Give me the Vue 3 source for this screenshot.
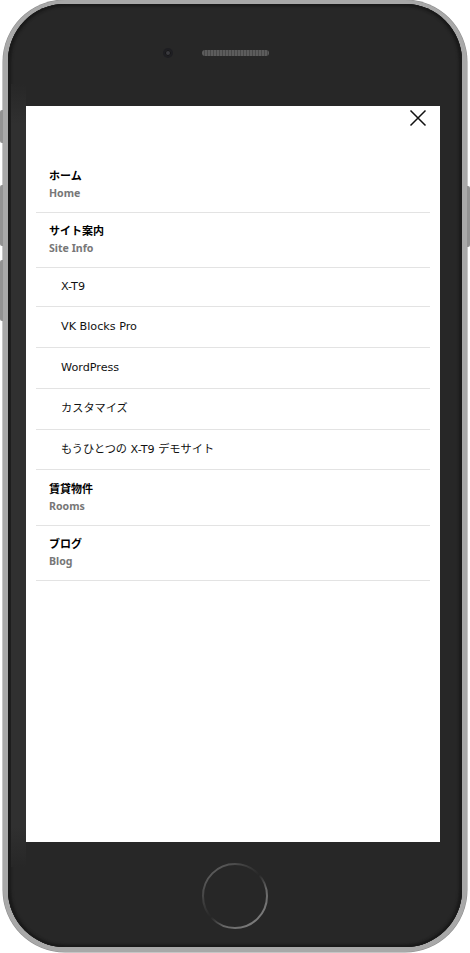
<script setup>
const rows = [
  { ja: 'ホーム', en: 'Home' },
  { ja: 'サイト案内', en: 'Site Info' },
  { sub: 'X-T9' },
  { sub: 'VK Blocks Pro' },
  { sub: 'WordPress' },
  { sub: 'カスタマイズ' },
  { sub: 'もうひとつの X-T9 デモサイト' },
  { ja: '賃貸物件', en: 'Rooms' },
  { ja: 'ブログ', en: 'Blog' },
]
</script>

<template>
  <div class="stage">
    <div class="phone">
      <span class="side left b1"></span>
      <span class="side left b2"></span>
      <span class="side left b3"></span>
      <span class="side right b4"></span>
      <div class="bezel">
        <div class="top">
          <span class="camera"></span>
          <span class="speaker"></span>
        </div>
        <div class="screen">
          <div class="closebar">
            <svg class="close" width="18" height="18" viewBox="0 0 18 18">
              <path d="M1.5 1.5 L16.5 16.5 M16.5 1.5 L1.5 16.5" stroke="#111" stroke-width="1.5" fill="none" />
            </svg>
          </div>
          <ul class="menu">
            <li v-for="r in rows" :key="r.ja || r.sub" :class="r.sub ? 'subrow' : 'mainrow'">
              <template v-if="r.sub">{{ r.sub }}</template>
              <template v-else>
                <strong class="ja">{{ r.ja }}</strong>
                <span class="en">{{ r.en }}</span>
              </template>
            </li>
          </ul>
        </div>
        <div class="bottom">
          <svg class="home" width="70" height="70" viewBox="0 0 70 70">
            <defs>
              <linearGradient id="ring" x1="0.15" y1="0.1" x2="0.85" y2="0.9">
                <stop offset="0" stop-color="#5c5c5c" />
                <stop offset="0.3" stop-color="#3a3a3a" />
                <stop offset="0.5" stop-color="#272727" />
                <stop offset="0.72" stop-color="#666" />
                <stop offset="1" stop-color="#7c7c7c" />
              </linearGradient>
            </defs>
            <circle cx="35" cy="35" r="32" fill="none" stroke="url(#ring)" stroke-width="2" />
          </svg>
        </div>
      </div>
    </div>
  </div>
</template>

<style scoped>
.stage {
  width: 470px;
  height: 953px;
  padding: 0 3px 1px;
  box-sizing: border-box;
  background: #fff;
  overflow: hidden;
}
.phone {
  position: relative;
  height: 952px;
  box-sizing: border-box;
  border: 5px solid #a8a8a8;
  border-top-width: 4px;
  border-radius: 62px;
  box-shadow: 0 0 0 0.5px #8d8d8d;
  background: #262626;
}
.side {
  position: absolute;
  width: 3px;
  background: #929292;
}
.left { left: -8px; border-radius: 2px 0 0 2px; }
.right { right: -8px; border-radius: 0 2px 2px 0; }
.b1 { top: 106px; height: 33px; }
.b2 { top: 181px; height: 61px; }
.b3 { top: 256px; height: 61px; }
.b4 { top: 182px; height: 61px; }
.bezel {
  position: relative;
  height: 100%;
  box-sizing: border-box;
  padding: 0 22px 0 18px;
  display: flex;
  flex-direction: column;
  border-radius: 57px;
  background: #272727;
  box-shadow: inset 0 2px 3px #1a1a1a, inset 3px 0 3px #1b1b1b, inset -3px 0 3px #1b1b1b, inset 0 -2px 3px #1a1a1a;
}
.bezel::before {
  content: "";
  position: absolute;
  left: 3px;
  top: 80px;
  bottom: 80px;
  width: 15px;
  background: linear-gradient(180deg, #272727, #303030 40px, #303030 calc(100% - 40px), #272727);
}
.top {
  height: 102px;
  flex: none;
  position: relative;
}
.camera {
  position: absolute;
  left: 139px;
  top: 46px;
  width: 6px;
  height: 6px;
  border-radius: 50%;
  background: #3a3a3e;
  box-shadow: 0 0 0 2px #1e1e22, inset 0 0 0 1px #161618;
}
.speaker {
  position: absolute;
  left: 176px;
  top: 46px;
  width: 67px;
  height: 6px;
  border-radius: 3px;
  background: repeating-linear-gradient(90deg, #5c5c5c 0 2px, #484848 2px 3px);
}
.screen {
  position: relative;
  height: 736px;
  flex: none;
  background: #fff;
  padding: 0 10px;
  box-sizing: border-box;
  font-family: "DejaVu Sans", "Noto Sans CJK JP", sans-serif;
}
.closebar {
  height: 51px;
  display: flex;
  justify-content: flex-end;
  align-items: flex-start;
  padding-top: 3px;
  box-sizing: border-box;
}
.close {
  margin-right: 3px;
}
.menu {
  list-style: none;
  margin: 0;
  padding: 0;
}
.menu li {
  border-bottom: 1px solid #e3e3e3;
  box-sizing: border-box;
}
.mainrow {
  height: 55px;
  padding: 10px 13px 0;
  display: flex;
  flex-direction: column;
}
.mainrow:nth-child(1),
.mainrow:nth-child(8) {
  height: 56px;
  padding-top: 11px;
}
.ja {
  font-size: 11px;
  line-height: 18px;
  color: #000;
  font-weight: 700;
}
.en {
  font-family: "Noto Sans", sans-serif;
  font-size: 10.6px;
  line-height: 14px;
  font-weight: 700;
  color: #777;
}
.subrow {
  height: 41px;
  padding-left: 25px;
  font-size: 11.2px;
  line-height: 40px;
  color: #111;
}
.subrow:nth-child(3) {
  height: 39px;
  line-height: 38px;
}
.subrow:nth-child(7) {
  height: 40px;
}
.bottom {
  flex: 1;
  position: relative;
}
.home {
  position: absolute;
  left: 174px;
  top: 19px;
}
</style>

<style>
html, body { margin: 0; background: #fff; }
</style>
